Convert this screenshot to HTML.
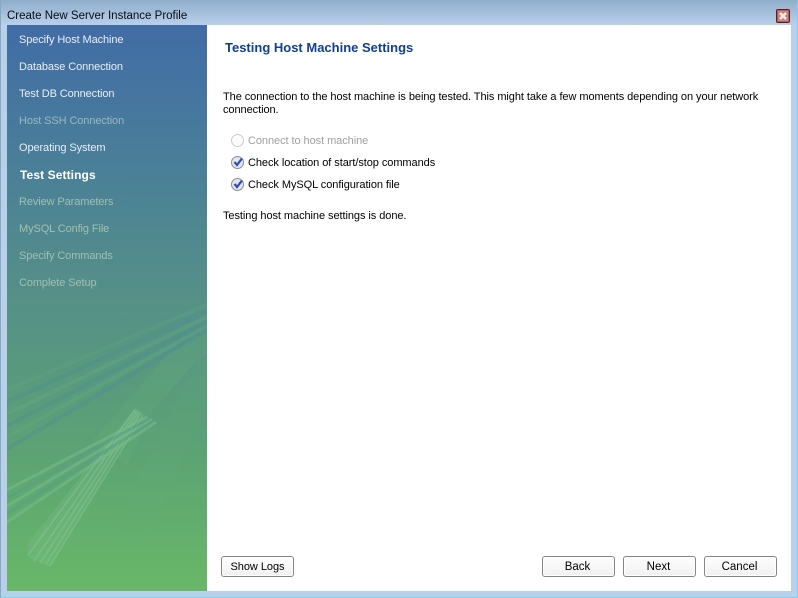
<!DOCTYPE html>
<html>
<head>
<meta charset="utf-8">
<style>
html,body{margin:0;padding:0;background:#b9cfe8}
#w{position:relative;width:798px;height:598px;overflow:hidden;font-family:"Liberation Sans",sans-serif;font-size:11px;letter-spacing:-.065px;color:#000;background:#b9d0ea}
#w div{position:absolute;white-space:nowrap}
.t{line-height:14px}
.s{left:19px;color:#e8eff5;line-height:14px;letter-spacing:-.1px}
.d{left:19px;color:#a0c0b0;line-height:14px;letter-spacing:-.1px}
.b{height:19px;border:1px solid #858585;border-radius:3px;background:linear-gradient(#fefefe,#f8f8f8 50%,#f0f0f0);box-shadow:inset 0 0 0 1px #fff;text-align:center;line-height:21px;box-sizing:content-box;font-size:11.5px;letter-spacing:0;text-indent:-2px}
</style>
</head>
<body>
<div id="w">
<div style="left:0;top:0;width:798px;height:25px;background:linear-gradient(#8fadcb,#b9d0ea)"></div>
<div style="left:0;top:0;width:1px;height:598px;background:#8aa8c4"></div>
<div style="left:797px;top:0;width:1px;height:598px;background:#7fd0ee"></div>
<div style="left:0;top:597px;width:798px;height:1px;background:#7fd0ee"></div>
<div class="t" style="left:7px;top:9px;font-size:11.5px;letter-spacing:0;color:#0a0a14">Create New Server Instance Profile</div>
<svg style="position:absolute;left:776px;top:9px" width="14" height="14" viewBox="0 0 14 14">
<rect x=".5" y=".5" width="13" height="13" rx="1.5" fill="#b4645a" stroke="#5a1a2a"/>
<rect x="2" y="2" width="10" height="10" fill="#c98478"/>
<path d="M4 4L10 10M10 4L4 10" stroke="#ecebee" stroke-width="2.4"/>
</svg>

<svg style="position:absolute;left:7px;top:25px" width="200" height="566" viewBox="0 0 200 566">
<defs>
<linearGradient id="g" x1="0" y1="0" x2="0" y2="1">
<stop offset="0" stop-color="#416ca6"/>
<stop offset=".25" stop-color="#4a7f98"/>
<stop offset=".47" stop-color="#558f88"/>
<stop offset=".75" stop-color="#5ca274"/>
<stop offset="1" stop-color="#68b868"/>
</linearGradient>
</defs>
<rect width="200" height="566" fill="url(#g)"/>
<path d="M200 303L160 330L86 415L120 440L146 385L193 332L200 330Z" fill="#6cb57c" opacity=".18"/>
<path d="M193 332L200 325V378L136 525L100 512Z" fill="#6cb57c" opacity=".1"/>
<g fill="none" stroke-width="4">
<path d="M0 365L200 280" stroke="#5fa584" opacity=".3"/>
<path d="M0 377L200 286" stroke="#4f8f90" opacity=".5"/>
<path d="M0 389L200 292" stroke="#5fa584" opacity=".5"/>
<path d="M0 401L200 297" stroke="#4f8f90" opacity=".5"/>
<path d="M0 412L200 301" stroke="#5fa584" opacity=".5"/>
<path d="M0 424L200 305" stroke="#4f8f90" opacity=".5"/>
</g>
<path d="M21 518L128 383L135 388L43 542L21 532Z" fill="#80c08e" opacity=".25"/>
<g fill="none" stroke-width="1.6" stroke="#86c794" opacity=".5">
<path d="M21 530L128 385"/>
<path d="M27 536L130 386"/>
<path d="M33 538L132 387"/>
<path d="M39 539L134 388"/>
<path d="M43 541L136 390"/>
</g>
<g fill="none" stroke-width="3">
<path d="M0 497L149 397" stroke="#78bc8c" opacity=".55"/>
<path d="M0 489L147 395" stroke="#5a9f88" opacity=".6"/>
<path d="M0 481L145 394" stroke="#78bc8c" opacity=".55"/>
<path d="M0 473L143 393" stroke="#5a9f88" opacity=".6"/>
<path d="M0 465L140 392" stroke="#78bc8c" opacity=".55"/>
</g>
</svg>

<div style="left:207px;top:25px;width:584px;height:566px;background:#fff"></div>

<div class="s" style="top:33px">Specify Host Machine</div>
<div class="s" style="top:60px">Database Connection</div>
<div class="s" style="top:87px">Test DB Connection</div>
<div class="d" style="top:114px;color:#9cb6c0">Host SSH Connection</div>
<div class="s" style="top:141px">Operating System</div>
<div class="s" style="top:168px;left:20px;font-weight:bold;font-size:12px;letter-spacing:.1px;color:#fff">Test Settings</div>
<div class="d" style="top:195px">Review Parameters</div>
<div class="d" style="top:222px">MySQL Config File</div>
<div class="d" style="top:249px">Specify Commands</div>
<div class="d" style="top:276px">Complete Setup</div>

<div class="t" style="left:225px;top:41px;font-size:13px;letter-spacing:0;font-weight:bold;color:#0f3f96">Testing Host Machine Settings</div>
<div class="t" style="left:223px;top:90px">The connection to the host machine is being tested. This might take a few moments depending on your network</div>
<div class="t" style="left:223px;top:103px">connection.</div>

<svg style="position:absolute;left:230px;top:133px" width="16" height="16"><circle cx="7.5" cy="7.5" r="6" fill="#fbfbfb" stroke="#cccccc"/></svg>
<div class="t" style="left:248px;top:134px;color:#a0a0a0">Connect to host machine</div>
<svg style="position:absolute;left:230px;top:155px" width="16" height="16"><circle cx="7.5" cy="7.5" r="6" fill="#e2e5ec" stroke="#8a8e96"/><path d="M4.5 7L7 10L12 3.5" fill="none" stroke="#2a4fb0" stroke-width="2.2"/></svg>
<div class="t" style="left:248px;top:156px">Check location of start/stop commands</div>
<svg style="position:absolute;left:230px;top:177px" width="16" height="16"><circle cx="7.5" cy="7.5" r="6" fill="#e2e5ec" stroke="#8a8e96"/><path d="M4.5 7L7 10L12 3.5" fill="none" stroke="#2a4fb0" stroke-width="2.2"/></svg>
<div class="t" style="left:248px;top:178px">Check MySQL configuration file</div>
<div class="t" style="left:223px;top:209px">Testing host machine settings is done.</div>

<div class="b" style="left:221px;top:556px;width:71px;font-size:11px;letter-spacing:-.05px;text-indent:0">Show Logs</div>
<div class="b" style="left:542px;top:556px;width:71px">Back</div>
<div class="b" style="left:623px;top:556px;width:71px">Next</div>
<div class="b" style="left:704px;top:556px;width:71px">Cancel</div>
</div>
</body>
</html>
